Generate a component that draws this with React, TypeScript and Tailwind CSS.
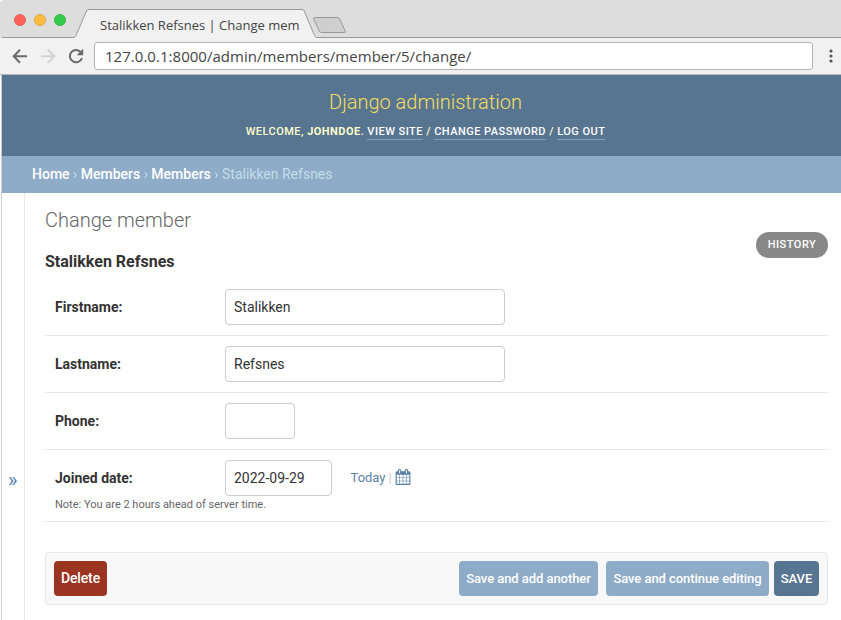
import React from 'react';

function BrowserChrome() {
  return (
    <div className="font-['Open_Sans','Noto_Sans',sans-serif]">
      <div className="relative h-[38px] overflow-hidden rounded-tl-[4px] bg-[#dddddd]">
        <svg className="absolute inset-0" width="841" height="38" viewBox="0 0 841 38">
          <path d="M2 37.5H74Q75 37.5 76 35.5L86.500 11Q87.200 9.500 89 9.500H302Q303.500 9.500 304.200 11L314.500 35.500Q315.300 37.500 317 37.500H841V38H2Z" fill="#f1f1f1" />
          <path d="M2 37.500H73Q75 37.500 76 35.500L86.500 11Q87.200 9.500 89 9.500H302Q303.500 9.500 304.200 11L314.500 35.500Q315.300 37.500 317 37.500H841" fill="none" stroke="#999999" />
          <path d="M315 17.500H337.500Q339 17.500 339.700 19L345.200 31Q346 32.500 344.500 32.500H321.500Q320 32.500 319.300 31L313.700 19Q313 17.500 315 17.500Z" fill="#cfcfcf" stroke="#999999" />
          <circle cx="20" cy="20" r="5.600" fill="#fc6159" stroke="#e4504b" strokeWidth=".7" />
          <circle cx="40" cy="20" r="5.600" fill="#fdbd41" stroke="#dfa033" strokeWidth=".7" />
          <circle cx="60" cy="20" r="5.600" fill="#34c94b" stroke="#27ad39" strokeWidth=".7" />
        </svg>
        <div className="relative ml-[100px] pt-[15px] text-[13px] leading-[20px] whitespace-nowrap text-[#444444]">
          Stalikken Refsnes | Change mem
        </div>
      </div>
      <div className="flex h-[37px] border-b border-[#b8b8b8] bg-[#f1f1f1] pl-[2px]">
        <svg width="92" height="36" viewBox="2 38 92 36" fill="none" className="shrink-0">
          <path d="M27 56.200H14M20 49.700L13.700 56.200L20 62.700" stroke="#6a6a6a" strokeWidth="2" />
          <path d="M41 56.200H54M48 49.700L54.300 56.200L48 62.700" stroke="#d3d3d3" strokeWidth="2" />
          <path d="M81.200 52.600A6.200 6.200 0 1 0 82 58" stroke="#6a6a6a" strokeWidth="2" />
          <path d="M83.200 48.800V55.300H76.700Z" fill="#6a6a6a" />
        </svg>
        <div className="mt-[4px] h-[28px] w-[719px] shrink-0 rounded-[3px] border border-[#b3b3b3] bg-white pl-[10px] text-[15px] leading-[27px] tracking-[0.03px] text-[#444444]">
          127.0.0.1:8000/admin/members/member/5/change/
        </div>
        <svg width="28" height="36" viewBox="813 38 28 36" fill="#555555" className="shrink-0">
          <circle cx="831" cy="51" r="1.600" />
          <circle cx="831" cy="56" r="1.600" />
          <circle cx="831" cy="61" r="1.600" />
        </svg>
      </div>
    </div>
  );
}

function HeaderLink({ children }: { children: React.ReactNode }) {
  return <span className="inline-block h-[15px] border-b border-[#829bb3] text-white">{children}</span>;
}

function AdminHeader() {
  return (
    <header className="flex h-[81px] w-[847px] flex-col items-center bg-[#577590]">
      <h1 className="mt-[16px] text-[20px] leading-[22px] font-light text-[#f5dd5d]">Django administration</h1>
      <div className="mt-[12px] text-[11px] leading-[14px] font-medium tracking-[0.47px] whitespace-nowrap text-[#ffffcc]">
        WELCOME, <b className="font-bold">JOHNDOE</b>. <HeaderLink>VIEW SITE</HeaderLink> / <HeaderLink>CHANGE PASSWORD</HeaderLink> / <HeaderLink>LOG OUT</HeaderLink>
      </div>
    </header>
  );
}

function FieldRow({ label, value, width, last = false, children }: { label: string; value: string; width: string; last?: boolean; children?: React.ReactNode }) {
  return (
    <div className={`${last ? 'h-[72px]' : 'h-[57px]'} border-b border-[#e8e8e8] pt-[10px] pl-[10px]`}>
      <div className="flex h-[36px] items-center text-[14px] text-[#333333]">
        <label className="w-[170px] font-bold">{label}</label>
        <div className={`${width} h-[36px] rounded-[4px] border border-[#cccccc] pl-[8px] leading-[34px]`}>{value}</div>
        {children}
      </div>
      {last && <p className="mt-[1px] text-[11px] leading-[15px] text-[#666666]">Note: You are 2 hours ahead of server time.</p>}
    </div>
  );
}

function CalendarIcon() {
  return (
    <svg className="mb-[2px] ml-[3px]" width="16" height="16" viewBox="0 0 1792 1792" fill="#5b80a5">
      <path d="M192 1664h288v-288h-288v288zm352 0h320v-288h-320v288zm-352-352h288v-320h-288v320zm352 0h320v-320h-320v320zm-352-384h288v-288h-288v288zm736 736h320v-288h-320v288zm-384-736h320v-288h-320v288zm768 736h288v-288h-288v288zm-384-352h320v-320h-320v320zm-352-864v-288q0-13-9.500-22.500t-22.500-9.500h-64q-13 0-22.500 9.500t-9.500 22.500v288q0 13 9.500 22.500t22.500 9.500h64q13 0 22.500-9.500t9.500-22.500zm736 864h288v-320h-288v320zm-384-384h320v-288h-320v288zm384 0h288v-288h-288v288zm32-480v-288q0-13-9.500-22.500t-22.500-9.500h-64q-13 0-22.500 9.500t-9.500 22.500v288q0 13 9.500 22.500t22.500 9.500h64q13 0 22.500-9.500t9.500-22.500zm384-64v1280q0 52-38 90t-90 38h-1408q-52 0-90-38t-38-90v-1280q0-52 38-90t90-38h128v-96q0-66 47-113t113-47h64q66 0 113 47t47 113v96h384v-96q0-66 47-113t113-47h64q66 0 113 47t47 113v96h128q52 0 90 38t38 90z" />
    </svg>
  );
}

export default function App() {
  return (
    <div className="h-[620px] w-[841px] overflow-hidden bg-white font-['Roboto',sans-serif]">
      <BrowserChrome />
      <div className="ml-px h-[545px] overflow-hidden border-l border-[#cccccc]">
        <AdminHeader />
        <nav className="h-[37px] bg-[#8eacc8] pl-[30px] text-[14px] leading-[37px] text-[#c4dce8]">
          <span className="font-medium text-white">Home</span>
          {' › '}
          <span className="font-medium text-white">Members</span>
          {' › '}
          <span className="font-medium text-white">Members</span>
          {' › '}
          <span>Stalikken Refsnes</span>
        </nav>
        <div className="flex h-[427px]">
          <aside className="w-[23px] shrink-0 border-r border-[#e8e8e8] pt-[275px] pl-[6px] text-[20px] leading-[24px] text-[#5b80a5]">»</aside>
          <main className="w-[803px] shrink-0 pl-[20px]">
            <div className="flex h-[86px] justify-between">
              <div>
                <h1 className="mt-[16px] text-[20px] leading-[22px] font-light text-[#666666]">Change member</h1>
                <h2 className="mt-[21px] text-[16px] leading-[20px] font-bold text-[#333333]">Stalikken Refsnes</h2>
              </div>
              <div className="mt-[39px] h-[26px] w-[72px] rounded-full bg-[#888888] text-center text-[11px] leading-[25px] font-medium tracking-[0.5px] text-white">HISTORY</div>
            </div>
            <FieldRow label="Firstname:" value="Stalikken" width="w-[280px]" />
            <FieldRow label="Lastname:" value="Refsnes" width="w-[280px]" />
            <FieldRow label="Phone:" value="" width="w-[70px]" />
            <FieldRow label="Joined date:" value="2022-09-29" width="w-[107px]" last>
              <span className="ml-[18.5px] text-[13px] text-[#5b80a5]">Today</span>
              <span className="ml-[3px] text-[13px] text-[#cccccc]">|</span>
              <CalendarIcon />
            </FieldRow>
            <div className="mt-[30px] flex h-[53px] items-center rounded-[4px] border border-[#e8e8e8] bg-[#f8f8f8] px-[8px] text-center text-[13px] leading-[35px] font-medium tracking-[-0.06px] whitespace-nowrap text-white">
              <div className="mr-auto h-[35px] w-[53px] rounded-[4px] bg-[#9c3422] text-[14px] tracking-[-0.15px]">Delete</div>
              <div className="h-[35px] w-[139px] rounded-[4px] bg-[#8eacc8]">Save and add another</div>
              <div className="ml-[8px] h-[35px] w-[163px] rounded-[4px] bg-[#8eacc8]">Save and continue editing</div>
              <div className="ml-[5px] h-[35px] w-[45px] rounded-[4px] bg-[#577590]">SAVE</div>
            </div>
          </main>
        </div>
      </div>
    </div>
  );
}
